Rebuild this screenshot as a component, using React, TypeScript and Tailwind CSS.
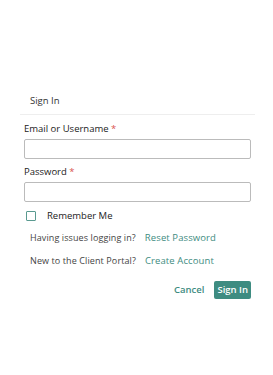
export default function App() {
  return (
    <div
      className="w-[273px] h-[375px] bg-white text-[#333]"
      style={{ fontFamily: '"Open Sans", "Liberation Sans", sans-serif' }}
    >
      <div className="pt-[93px] pl-5 pr-[18px]">
        <div className="border-b border-[#eeeeee] pb-[5px] pl-[10px] text-[9.5px] leading-[16px] text-[#333]">
          Sign In
        </div>
        <div className="px-1 pt-[7px]">
          <label className="block text-[9.5px] leading-[14px] text-[#222]">
            Email or Username <span className="text-[#d9534f]">*</span>
          </label>
          <input className="mt-[3px] block w-full h-[20px] border border-[#bbbbbb] rounded-[2px]" />
          <label className="block mt-[6px] text-[9.5px] leading-[14px] text-[#222]">
            Password <span className="text-[#d9534f]">*</span>
          </label>
          <input
            type="password"
            className="mt-[3px] block w-full h-[20px] border border-[#bbbbbb] rounded-[2px]"
          />
          <div className="mt-[7px] flex items-center">
            <span className="ml-[2px] w-[10px] h-[10px] border-[1.5px] border-[#5a9a90] rounded-[1px]" />
            <span className="ml-[11px] text-[9.5px] text-[#222]">Remember Me</span>
          </div>
          <div className="mt-[8px] pl-[6px] text-[9px] leading-[14px] tracking-[0.1px] text-[#444]">
            Having issues logging in?
            <span className="ml-[9px] text-[9.5px] text-[#3e8c81]">Reset Password</span>
          </div>
          <div className="mt-[9px] pl-[6px] text-[9px] leading-[14px] tracking-[0.1px] text-[#444]">
            New to the Client Portal?
            <span className="ml-[9px] text-[9.5px] text-[#3e8c81]">Create Account</span>
          </div>
          <div className="mt-[13px] flex justify-end items-center gap-[10px]">
            <button className="text-[9.5px] text-[#3e8c81] font-semibold">Cancel</button>
            <button className="h-[18px] px-[3px] rounded-[2px] bg-[#3e8c81] text-white text-[9.5px] font-semibold">
              Sign In
            </button>
          </div>
        </div>
      </div>
    </div>
  );
}
